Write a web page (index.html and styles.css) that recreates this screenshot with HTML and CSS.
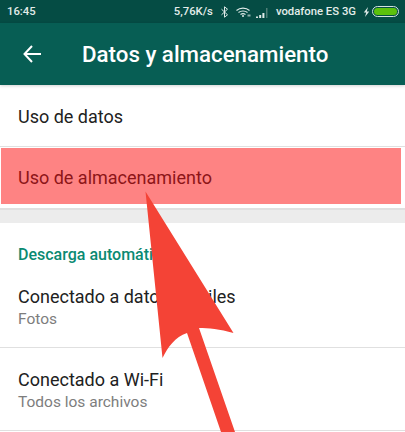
FILE: index.html
```html
<!DOCTYPE html>
<html lang="es">
<head>
<meta charset="utf-8">
<title>Datos y almacenamiento</title>
<link rel="stylesheet" href="styles.css">
</head>
<body>
<div class="screen">
  <div class="status">
    <span class="time">16:45</span>
    <div class="status-right">
      <span>5,76K/s</span>
      <svg class="ic-bt" viewBox="0 0 7 12" width="7" height="12"><path d="M.5 3.200l6 5.600-3 2.400V.8l3 2.400-6 5.600" fill="none" stroke="#dfeae8" stroke-width="1"/></svg>
      <svg class="ic-wifi" viewBox="0 0 15 10" width="15" height="10"><path d="M.5 3.500C4 .3 10 .3 13.500 3.500M2.500 5.500C5 3.500 9 3.500 11.500 5.500M4.500 7.500C6 6.500 8 6.500 9.500 7.500" fill="none" stroke="#dfeae8" stroke-width="1.100"/><circle cx="7" cy="9" r="1" fill="#dfeae8"/><rect x="11.500" y="7.500" width="3" height="2" fill="#8fb0aa"/></svg>
      <svg class="ic-signal" viewBox="0 0 13 10" width="13" height="10"><path d="M0 8.500h2V10H0zM3.200 7h2v3h-2zM6.400 5h2v5h-2z" fill="#dfeae8"/><path d="M10 0h1.500v10H10z" fill="#4f7f77"/></svg>
      <span class="carrier">vodafone ES 3G</span>
      <svg class="ic-bolt" viewBox="0 0 7 10" width="7" height="10"><path d="M5 0L.8 5.500h2.400L2 10l4.200-5.500H3.800z" fill="#dfeae8"/></svg>
      <span class="battery"><span class="battery-fill"></span></span>
    </div>
  </div>
  <header class="toolbar">
    <svg class="back" viewBox="0 0 18 18" width="18" height="18"><path d="M18 9H1.500M9 1L1.500 9 9 17" fill="none" stroke="#fff" stroke-width="2"/></svg>
    <h1 class="title">Datos y almacenamiento</h1>
  </header>
  <main class="content">
    <div class="row simple">Uso de datos</div>
    <div class="row highlighted"><span class="hl-box">Uso de almacenamiento</span></div>
    <div class="band"></div>
    <div class="section">Descarga automática</div>
    <div class="row double">
      <div class="primary">Conectado a datos móviles</div>
      <div class="secondary">Fotos</div>
    </div>
    <div class="row double">
      <div class="primary">Conectado a Wi-Fi</div>
      <div class="secondary">Todos los archivos</div>
    </div>
  </main>
  <svg class="arrow" viewBox="0 0 405 432" width="405" height="432"><path d="M145.500 191.500L233.500 333C220 329 208 328 199 328L235 432H221L187 333C175 337 168 347 162.500 358Z" fill="#f44336"/></svg>
</div>
</body>
</html>
```

FILE: styles.css
```css
* { box-sizing: border-box; }
html, body { margin: 0; padding: 0; background: #fff; }
.screen {
  position: relative;
  width: 405px;
  height: 432px;
  overflow: hidden;
  font-family: Roboto, "Liberation Sans", sans-serif;
  background: #fff;
}
.status {
  height: 23px;
  background: #054c44;
  color: #e3ecea;
  font-size: 11.300px;
  font-weight: 500;
  display: flex;
  align-items: center;
  justify-content: space-between;
  padding: 0 6px 0 7px;
}
.status-right { display: flex; align-items: center; }
.ic-bt { margin-left: 8px; }
.ic-wifi { margin-left: 8px; }
.ic-signal { margin-left: 5px; margin-top: 2px; }
.carrier { margin-left: 7px; }
.ic-bolt { margin-left: 7px; }
.battery {
  display: block;
  margin-left: 2px;
  width: 27px;
  height: 11px;
  border: 1px solid #d3e2df;
  border-radius: 6px;
  padding: 1px;
}
.battery-fill { display: block; height: 100%; background: #5cc00c; border-radius: 4px; }
.toolbar {
  position: relative;
  height: 62px;
  background: #075e54;
  color: #fff;
  display: flex;
  align-items: center;
  padding: 0 0 0 23px;
  box-shadow: 0 1px 3px rgba(0, 0, 0, 0.18);
}
.back { flex: none; }
.title { margin: 0 0 0 41px; font-size: 22.300px; font-weight: 500; white-space: nowrap; }
.row { border-bottom: 1px solid #e0e0e0; padding-left: 18px; color: #212121; }
.simple { font-size: 18px; height: 62px; padding-top: 2px; display: flex; align-items: center; }
.highlighted {
  padding: 1px 4px 4px 1px;
  height: 62px;
}
.hl-box {
  display: flex;
  align-items: center;
  width: 100%;
  height: 100%;
  padding: 2px 0 0 17px;
  font-size: 18px;
  background: #fe8383;
  color: #8d1518;
}
.band { height: 14px; background: #ececec; border-top: 1px solid #e0e0e0; }
.section {
  padding-top: 22px;
  padding-left: 18px;
  height: 42px;
  font-size: 16px;
  line-height: 20px;
  font-weight: 500;
  color: #0a8a72;
}
.double { height: 83px; padding-top: 21px; }
.primary { font-size: 18px; line-height: 22px; }
.secondary { font-size: 15.500px; line-height: 20px; margin-top: 1px; color: #7d7d7d; }
.arrow { position: absolute; left: 0; top: 0; }
```
